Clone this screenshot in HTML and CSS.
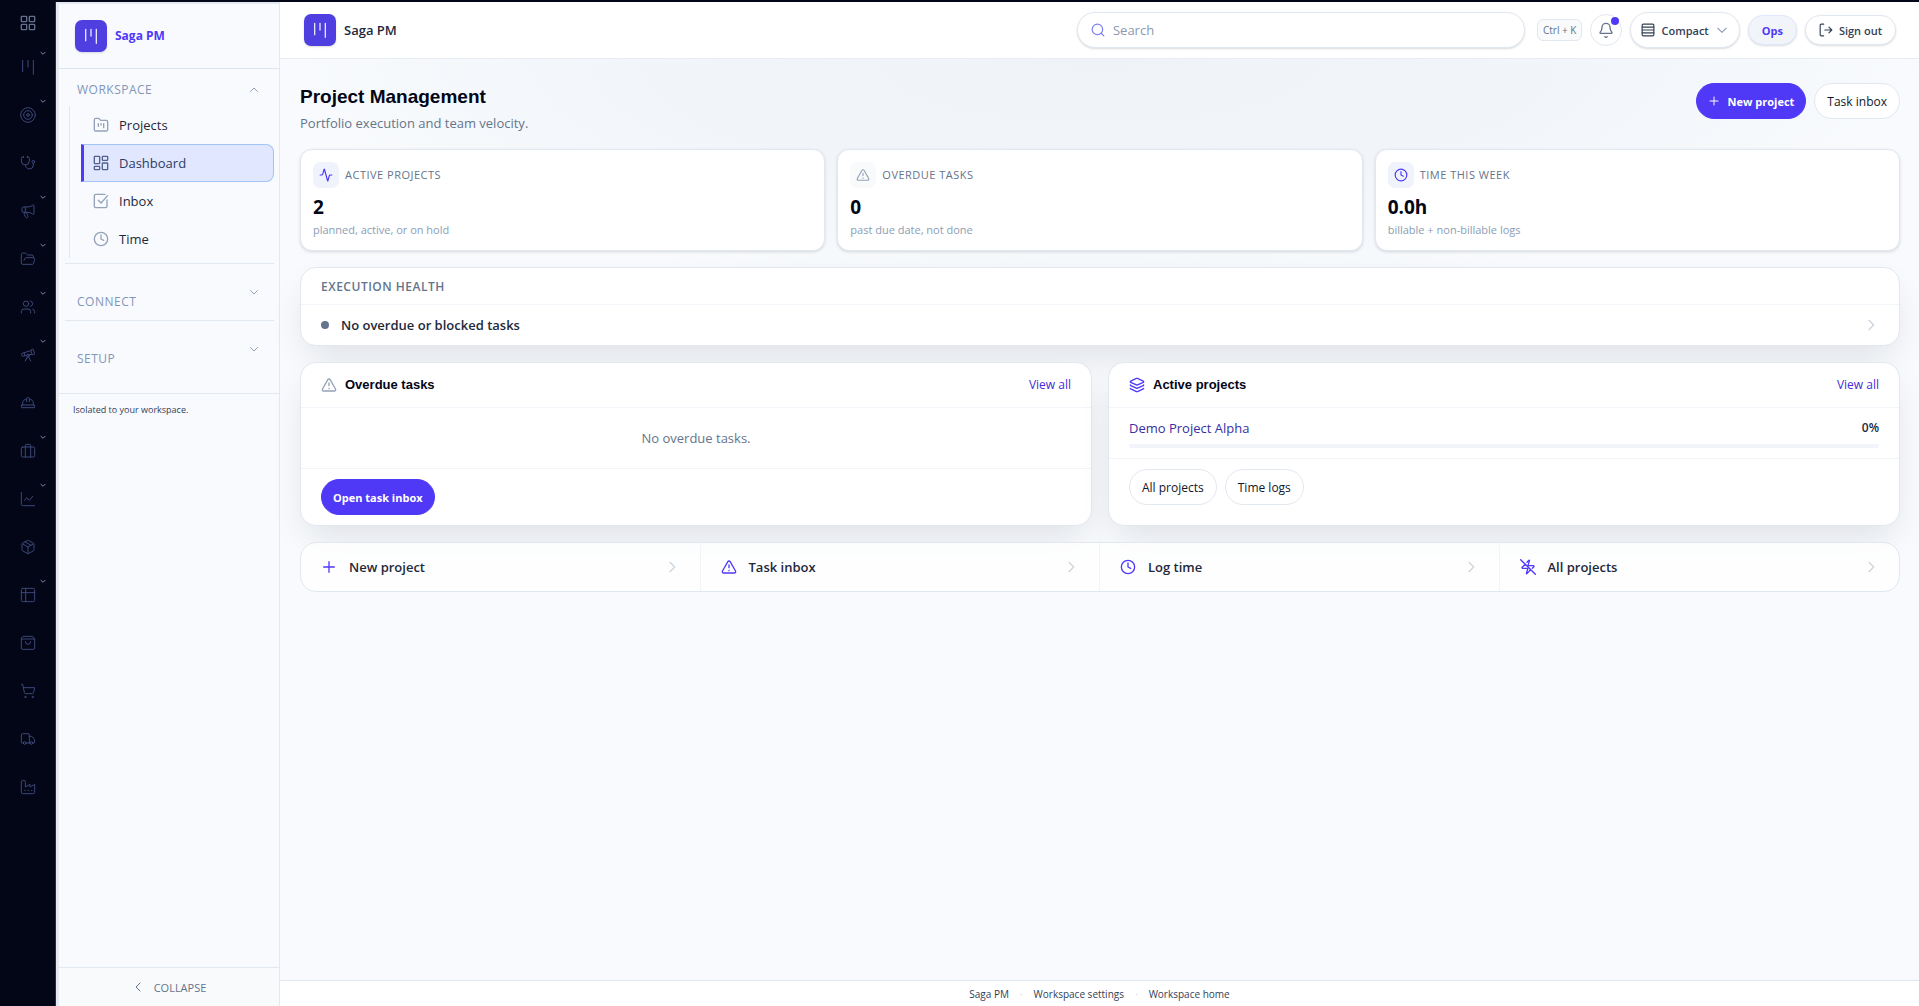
FILE: index.html
```html
<!DOCTYPE html>
<html lang="en">
<head>
    <meta charset="UTF-8">
    <meta name="viewport" content="width=device-width, initial-scale=1.0">
    <title>Saga PM</title>
    <link rel="stylesheet" href="styles.css">
</head>
<body>
    <!-- icon sprite -->
    <svg class="sprite" xmlns="http://www.w3.org/2000/svg">
        <symbol id="i-grid" viewBox="0 0 24 24"><rect x="2" y="2" width="8" height="8" rx="1"/><rect x="14" y="2" width="8" height="8" rx="1"/><rect x="14" y="14" width="8" height="8" rx="1"/><rect x="2" y="14" width="8" height="8" rx="1"/></symbol>
        <symbol id="i-bars" viewBox="0 0 24 24"><path d="M4 2v17M12 2v10M20 2v21"/></symbol>
        <symbol id="i-target" viewBox="0 0 24 24"><circle cx="12" cy="12" r="11"/><circle cx="12" cy="12" r="6.5"/><circle cx="12" cy="12" r="2"/></symbol>
        <symbol id="i-stethoscope" viewBox="0 0 24 24"><path d="M11 2v2M5 2v2M5 3H4a2 2 0 0 0-2 2v4a6 6 0 0 0 12 0V5a2 2 0 0 0-2-2h-1M8 15a6 6 0 0 0 12 0v-3"/><circle cx="20" cy="10" r="2"/></symbol>
        <symbol id="i-megaphone" viewBox="0 0 24 24"><path d="M11 6a13 13 0 0 0 8.400-2.800A1 1 0 0 1 21 4v12a1 1 0 0 1-1.600.8A13 13 0 0 0 11 14H5a2 2 0 0 1-2-2V8a2 2 0 0 1 2-2zM6 14a12 12 0 0 0 2.400 7.200 2 2 0 0 0 3.200-2.400A8 8 0 0 1 10 14M8 6v8"/></symbol>
        <symbol id="i-folder-open" viewBox="0 0 24 24"><path d="m6 14 1.450-2.900A2 2 0 0 1 9.240 10H20a2 2 0 0 1 1.940 2.500l-1.550 6a2 2 0 0 1-1.940 1.500H4a2 2 0 0 1-2-2V5c0-1.100.9-2 2-2h3.930a2 2 0 0 1 1.660.9l.82 1.200a2 2 0 0 0 1.660.9H18a2 2 0 0 1 2 2v2"/></symbol>
        <symbol id="i-users" viewBox="0 0 24 24"><path d="M16 21v-2a4 4 0 0 0-4-4H6a4 4 0 0 0-4 4v2M22 21v-2a4 4 0 0 0-3-3.870M16 3.130a4 4 0 0 1 0 7.750"/><circle cx="9" cy="7" r="4"/></symbol>
        <symbol id="i-telescope" viewBox="0 0 24 24"><path d="m10.065 12.493-6.180 1.318a.934.934 0 0 1-1.108-.702l-.537-2.150a1.070 1.070 0 0 1 .691-1.265l13.504-4.440M13.560 11.747l4.332-.924M16 21l-3.105-6.210M16.485 5.940a2 2 0 0 1 1.455-2.425l1.090-.272a1 1 0 0 1 1.212.727l1.515 6.060a1 1 0 0 1-.727 1.213l-1.090.272a2 2 0 0 1-2.425-1.455zM6.158 8.633l1.114 4.456M8 21l3.105-6.210"/><circle cx="12" cy="13" r="2"/></symbol>
        <symbol id="i-hat" viewBox="0 0 24 24"><path d="M10 10V5a1 1 0 0 1 1-1h2a1 1 0 0 1 1 1v5M14 6a6 6 0 0 1 6 6v3M4 15v-3a6 6 0 0 1 6-6"/><rect x="2" y="15" width="20" height="4" rx="1"/></symbol>
        <symbol id="i-briefcase" viewBox="0 0 24 24"><path d="M8 21V4a2 2 0 0 1 2-2h4a2 2 0 0 1 2 2v17"/><rect x="2" y="6" width="20" height="15" rx="2"/></symbol>
        <symbol id="i-chart" viewBox="0 0 24 24"><path d="M2 2v18a2 2 0 0 0 2 2h18M19 8l-5 6-4-4-3 4"/></symbol>
        <symbol id="i-package" viewBox="0 0 24 24"><path d="M11 21.730a2 2 0 0 0 2 0l7-4A2 2 0 0 0 21 16V8a2 2 0 0 0-1-1.730l-7-4a2 2 0 0 0-2 0l-7 4A2 2 0 0 0 3 8v8a2 2 0 0 0 1 1.730zM12 22V12M3.300 7 12 12l8.700-5M7.500 4.270l9 5.150"/></symbol>
        <symbol id="i-table" viewBox="0 0 24 24"><rect x="2" y="2" width="20" height="20" rx="2"/><path d="M2 8.500h20M8.500 2v20"/></symbol>
        <symbol id="i-bag" viewBox="0 0 24 24"><path d="M2 5.500v14a2 2 0 0 0 2 2h16a2 2 0 0 0 2-2v-14L19 2H5zM2 6h20M16 10a4 4 0 0 1-8 0"/></symbol>
        <symbol id="i-cart" viewBox="0 0 24 24"><circle cx="8" cy="21" r="1"/><circle cx="19" cy="21" r="1"/><path d="M2 2h2l2.660 12.420a2 2 0 0 0 2 1.580h9.780a2 2 0 0 0 1.950-1.570L22 7H5.120"/></symbol>
        <symbol id="i-truck" viewBox="0 0 24 24"><path d="M14 18V6a2 2 0 0 0-2-2H4a2 2 0 0 0-2 2v11a1 1 0 0 0 1 1h2M15 18H9M19 18h2a1 1 0 0 0 1-1v-3.650a1 1 0 0 0-.22-.624l-3.480-4.350A1 1 0 0 0 17.520 8H14"/><circle cx="17" cy="18" r="2"/><circle cx="7" cy="18" r="2"/></symbol>
        <symbol id="i-factory" viewBox="0 0 24 24"><path d="M2 20a2 2 0 0 0 2 2h16a2 2 0 0 0 2-2V8l-7 4V8l-7 4V4a2 2 0 0 0-2-2H4a2 2 0 0 0-2 2zM17 17h1M12 17h1M7 17h1"/></symbol>
        <symbol id="i-folder-kanban" viewBox="0 0 24 24"><path d="M4 21h16a2 2 0 0 0 2-2V7a2 2 0 0 0-2-2h-8a2 2 0 0 1-1.700-.9l-.8-1.200A2 2 0 0 0 7.900 2H4a2 2 0 0 0-2 2v15c0 1.100.9 2 2 2zM8 10v4M12 10v2M16 10v6"/></symbol>
        <symbol id="i-dashboard" viewBox="0 0 24 24"><rect x="2" y="2" width="8" height="11" rx="1"/><rect x="14" y="2" width="8" height="6" rx="1"/><rect x="14" y="12" width="8" height="10" rx="1"/><rect x="2" y="17" width="8" height="5" rx="1"/></symbol>
        <symbol id="i-check" viewBox="0 0 24 24"><path d="M21 10.500V20a2 2 0 0 1-2 2H4a2 2 0 0 1-2-2V4a2 2 0 0 1 2-2h14M8 11l4 4L22 4"/></symbol>
        <symbol id="i-clock" viewBox="0 0 24 24"><circle cx="12" cy="12" r="10"/><path d="M12 6v6l4 2"/></symbol>
        <symbol id="i-down" viewBox="0 0 24 24"><path d="m5 9 7 7 7-7"/></symbol>
        <symbol id="i-up" viewBox="0 0 24 24"><path d="m5 15 7-7 7 7"/></symbol>
        <symbol id="i-left" viewBox="0 0 24 24"><path d="m16 4-8 8 8 8"/></symbol>
        <symbol id="i-right" viewBox="0 0 24 24"><path d="m9 5 7 7-7 7"/></symbol>
        <symbol id="i-search" viewBox="0 0 24 24"><circle cx="11" cy="11" r="9"/><path d="m22 22-4-4"/></symbol>
        <symbol id="i-bell" viewBox="0 0 24 24"><path d="M10.300 22a2 2 0 0 0 3.400 0M3.300 15.300A1 1 0 0 0 4 17h16a1 1 0 0 0 .74-1.670C19.400 14 18 12.500 18 8A6 6 0 0 0 6 8c0 4.500-1.400 6-2.700 7.300"/></symbol>
        <symbol id="i-rows" viewBox="0 0 24 24"><rect x="2" y="2" width="20" height="20" rx="2"/><path d="M2 7h20M2 12h20M2 17h20"/></symbol>
        <symbol id="i-logout" viewBox="0 0 24 24"><path d="M8 2H4a2 2 0 0 0-2 2v16a2 2 0 0 0 2 2h4M17 17l5-5-5-5M22 12H10"/></symbol>
        <symbol id="i-plus" viewBox="0 0 24 24"><path d="M4 12h16M12 4v16"/></symbol>
        <symbol id="i-activity" viewBox="0 0 24 24"><path d="M22 12h-2.500a2 2 0 0 0-1.930 1.460l-2.350 8.360a.25.25 0 0 1-.48 0L9.240 2.180a.25.25 0 0 0-.48 0l-2.350 8.360A2 2 0 0 1 4.490 12H2"/></symbol>
        <symbol id="i-warn" viewBox="0 0 24 24"><path d="m21.730 18-8-14a2 2 0 0 0-3.480 0l-8 14A2 2 0 0 0 4 21h16a2 2 0 0 0 1.730-3M12 9v4M12 17v.5"/></symbol>
        <symbol id="i-layers" viewBox="0 0 24 24"><path d="M12.830 2.180a2 2 0 0 0-1.660 0L2.600 6.080a1 1 0 0 0 0 1.830l8.580 3.910a2 2 0 0 0 1.660 0l8.580-3.900a1 1 0 0 0 0-1.830zM2 12a1 1 0 0 0 .58.910l8.600 3.910a2 2 0 0 0 1.650 0l8.580-3.900A1 1 0 0 0 22 12M2 17a1 1 0 0 0 .58.910l8.600 3.910a2 2 0 0 0 1.650 0l8.580-3.900A1 1 0 0 0 22 17"/></symbol>
        <symbol id="i-zap-off" viewBox="0 0 24 24"><path d="M10.500 4.900 13.400 2a.5.5 0 0 1 .86.460l-1.900 6A1 1 0 0 0 13.300 10H20a1 1 0 0 1 .8 1.600l-2.300 2.400M16 16l-5.500 5.900a.5.5 0 0 1-.86-.46l1.920-6.020A1 1 0 0 0 10.620 14H4a1 1 0 0 1-.78-1.630L8 8M1 1l22 22"/></symbol>
    </svg>

    <div class="app">
        <nav class="rail" aria-label="Apps">
            <a href="#" class="rail-item rail-home" aria-label="All apps"><svg class="icon"><use href="#i-grid"/></svg></a>
            <a href="#" class="rail-item" aria-label="Projects"><svg class="icon"><use href="#i-bars"/></svg><svg class="rail-caret"><use href="#i-down"/></svg></a>
            <a href="#" class="rail-item" aria-label="Goals"><svg class="icon"><use href="#i-target"/></svg><svg class="rail-caret"><use href="#i-down"/></svg></a>
            <a href="#" class="rail-item" aria-label="Health"><svg class="icon"><use href="#i-stethoscope"/></svg></a>
            <a href="#" class="rail-item" aria-label="Marketing"><svg class="icon"><use href="#i-megaphone"/></svg><svg class="rail-caret"><use href="#i-down"/></svg></a>
            <a href="#" class="rail-item" aria-label="Files"><svg class="icon"><use href="#i-folder-open"/></svg><svg class="rail-caret"><use href="#i-down"/></svg></a>
            <a href="#" class="rail-item" aria-label="People"><svg class="icon"><use href="#i-users"/></svg><svg class="rail-caret"><use href="#i-down"/></svg></a>
            <a href="#" class="rail-item" aria-label="Discovery"><svg class="icon"><use href="#i-telescope"/></svg><svg class="rail-caret"><use href="#i-down"/></svg></a>
            <a href="#" class="rail-item" aria-label="Field"><svg class="icon"><use href="#i-hat"/></svg></a>
            <a href="#" class="rail-item" aria-label="Business"><svg class="icon"><use href="#i-briefcase"/></svg><svg class="rail-caret"><use href="#i-down"/></svg></a>
            <a href="#" class="rail-item" aria-label="Analytics"><svg class="icon"><use href="#i-chart"/></svg><svg class="rail-caret"><use href="#i-down"/></svg></a>
            <a href="#" class="rail-item" aria-label="Inventory"><svg class="icon"><use href="#i-package"/></svg></a>
            <a href="#" class="rail-item" aria-label="Tables"><svg class="icon"><use href="#i-table"/></svg><svg class="rail-caret"><use href="#i-down"/></svg></a>
            <a href="#" class="rail-item" aria-label="Store"><svg class="icon"><use href="#i-bag"/></svg></a>
            <a href="#" class="rail-item" aria-label="Orders"><svg class="icon"><use href="#i-cart"/></svg></a>
            <a href="#" class="rail-item" aria-label="Shipping"><svg class="icon"><use href="#i-truck"/></svg></a>
            <a href="#" class="rail-item" aria-label="Manufacturing"><svg class="icon"><use href="#i-factory"/></svg></a>
        </nav>

        <aside class="sidebar">
            <a href="#" class="side-brand"><span class="logo"><svg class="icon"><use href="#i-bars"/></svg></span>Saga PM</a>
            <div class="side-group">
                <button type="button" class="side-title side-title-open">Workspace<svg class="icon"><use href="#i-up"/></svg></button>
                <div class="side-links">
                    <a href="#" class="side-link"><svg class="icon"><use href="#i-folder-kanban"/></svg>Projects</a>
                    <a href="#" class="side-link active"><svg class="icon"><use href="#i-dashboard"/></svg>Dashboard</a>
                    <a href="#" class="side-link"><svg class="icon"><use href="#i-check"/></svg>Inbox</a>
                    <a href="#" class="side-link"><svg class="icon"><use href="#i-clock"/></svg>Time</a>
                </div>
            </div>
            <div class="side-group">
                <button type="button" class="side-title"><span>Connect</span><svg class="icon"><use href="#i-down"/></svg></button>
            </div>
            <div class="side-group side-group-last">
                <button type="button" class="side-title"><span>Setup</span><svg class="icon"><use href="#i-down"/></svg></button>
            </div>
            <p class="side-note">Isolated to your workspace.</p>
            <button type="button" class="collapse"><svg class="icon"><use href="#i-left"/></svg>Collapse</button>
        </aside>

        <div class="page">
            <header class="topbar">
                <a href="#" class="brand"><span class="logo"><svg class="icon"><use href="#i-bars"/></svg></span>Saga PM</a>
                <div class="tools">
                    <label class="search"><svg class="icon"><use href="#i-search"/></svg><input type="search" placeholder="Search" aria-label="Search"></label>
                    <kbd>Ctrl + K</kbd>
                    <button type="button" class="bell" aria-label="Notifications"><svg class="icon"><use href="#i-bell"/></svg><span class="bell-dot"></span></button>
                    <button type="button" class="tool tool-tall"><svg class="icon"><use href="#i-rows"/></svg>Compact<svg class="icon caret"><use href="#i-down"/></svg></button>
                    <button type="button" class="tool ops">Ops</button>
                    <button type="button" class="tool"><svg class="icon"><use href="#i-logout"/></svg>Sign out</button>
                </div>
            </header>

            <main class="main">
                <div class="heading">
                    <div>
                        <h1>Project Management</h1>
                        <p>Portfolio execution and team velocity.</p>
                    </div>
                    <div class="actions">
                        <button type="button" class="btn primary"><svg class="icon"><use href="#i-plus"/></svg>New project</button>
                        <button type="button" class="btn">Task inbox</button>
                    </div>
                </div>

                <section class="stats">
                    <div class="stat">
                        <div class="stat-label"><span class="chip"><svg class="icon"><use href="#i-activity"/></svg></span>Active projects</div>
                        <div class="stat-value">2</div>
                        <div class="stat-hint">planned, active, or on hold</div>
                    </div>
                    <div class="stat">
                        <div class="stat-label"><span class="chip muted"><svg class="icon"><use href="#i-warn"/></svg></span>Overdue tasks</div>
                        <div class="stat-value">0</div>
                        <div class="stat-hint">past due date, not done</div>
                    </div>
                    <div class="stat">
                        <div class="stat-label"><span class="chip"><svg class="icon"><use href="#i-clock"/></svg></span>Time this week</div>
                        <div class="stat-value">0.0h</div>
                        <div class="stat-hint">billable + non-billable logs</div>
                    </div>
                </section>

                <section class="panel">
                    <h2 class="health-title">Execution health</h2>
                    <a href="#" class="health-row"><span class="dot"></span>No overdue or blocked tasks<svg class="icon go"><use href="#i-right"/></svg></a>
                </section>

                <div class="columns">
                    <section class="panel">
                        <div class="panel-head"><svg class="icon muted"><use href="#i-warn"/></svg><h2>Overdue tasks</h2><a href="#">View all</a></div>
                        <p class="empty">No overdue tasks.</p>
                        <div class="panel-foot"><button type="button" class="btn primary">Open task inbox</button></div>
                    </section>
                    <section class="panel">
                        <div class="panel-head"><svg class="icon"><use href="#i-layers"/></svg><h2>Active projects</h2><a href="#">View all</a></div>
                        <div class="project">
                            <div class="project-row"><a href="#">Demo Project Alpha</a><span>0%</span></div>
                            <div class="progress"></div>
                        </div>
                        <div class="panel-foot">
                            <button type="button" class="btn">All projects</button>
                            <button type="button" class="btn">Time logs</button>
                        </div>
                    </section>
                </div>

                <nav class="quick" aria-label="Quick actions">
                    <a href="#"><svg class="icon"><use href="#i-plus"/></svg>New project<svg class="icon go"><use href="#i-right"/></svg></a>
                    <a href="#"><svg class="icon"><use href="#i-warn"/></svg>Task inbox<svg class="icon go"><use href="#i-right"/></svg></a>
                    <a href="#"><svg class="icon"><use href="#i-clock"/></svg>Log time<svg class="icon go"><use href="#i-right"/></svg></a>
                    <a href="#"><svg class="icon"><use href="#i-zap-off"/></svg>All projects<svg class="icon go"><use href="#i-right"/></svg></a>
                </nav>
            </main>

            <footer class="footer">
                <a href="#">Saga PM</a><span>·</span><a href="#">Workspace settings</a><span>·</span><a href="#">Workspace home</a>
            </footer>
        </div>
    </div>
</body>
</html>
```
FILE: styles.css
```css
* {
    box-sizing: border-box;
}

body {
    margin: 0;
    font-family: "Open Sans", "Noto Sans", sans-serif;
    font-size: 13px;
    line-height: 20px;
    color: #0f172a;
    background-color: #f8fafc;
}

h1, h2, p {
    margin: 0;
}

a {
    color: inherit;
    text-decoration: none;
}

button {
    font-family: inherit;
    cursor: pointer;
}

.sprite {
    display: none;
}

.icon {
    width: 16px;
    height: 16px;
    flex: none;
    fill: none;
    stroke: currentColor;
    stroke-width: 2;
    stroke-linecap: round;
    stroke-linejoin: round;
}

.app {
    display: flex;
    min-height: 100vh;
    border-top: 2px solid #020617;
}

/* dark app rail */
.rail {
    width: 56px;
    flex: none;
    display: flex;
    flex-direction: column;
    align-items: center;
    padding-left: 1px;
    background-color: #020617;
    border-right: 1px solid #272c42;
}

.rail-item {
    position: relative;
    width: 100%;
    height: 48px;
    display: flex;
    align-items: center;
    justify-content: center;
    color: #3d4878;
}

.rail-item .icon {
    stroke-width: 1.5;
}

.rail-home {
    height: 41px;
    color: #64708c;
}

.rail-home .icon {
    stroke-width: 2;
}

.rail-caret {
    position: absolute;
    right: 8px;
    top: 6px;
    width: 8px;
    height: 8px;
    fill: none;
    stroke: #7c8bb0;
    stroke-width: 3;
}

/* sidebar */
.sidebar {
    width: 224px;
    flex: none;
    display: flex;
    flex-direction: column;
    background-color: #f8fafe;
    border: solid #e4e9f1;
    border-width: 2px 1px 0 3px;
}

.logo {
    width: 32px;
    height: 32px;
    flex: none;
    display: flex;
    align-items: center;
    justify-content: center;
    border-radius: 7px;
    background-color: #4f3fe0;
    color: #e4e8ff;
    box-shadow: 0 1px 2px rgba(15, 23, 42, 0.15);
}

.side-brand {
    display: flex;
    align-items: center;
    gap: 8px;
    height: 65px;
    padding: 0 16px;
    border-bottom: 1px solid #dde6f0;
    font-size: 12px;
    font-weight: 700;
    color: #4f39f6;
}

.side-group {
    margin: 0 5px 0 6px;
    border-bottom: 1px solid #e2e8f0;
}

.side-title {
    width: 100%;
    height: 56px;
    display: flex;
    justify-content: space-between;
    padding: 22px 14px 0 12px;
    border: none;
    background: none;
    font-size: 12px;
    font-weight: 500;
    line-height: 16px;
    letter-spacing: 0.5px;
    text-transform: uppercase;
    color: #8296b8;
}

.side-title span {
    padding-top: 8px;
}

.side-title .icon {
    width: 12px;
    height: 12px;
    color: #94a3b8;
}

.side-title-open {
    height: 37px;
    padding-top: 12px;
    align-items: center;
    padding-bottom: 8px;
}

.side-links {
    display: flex;
    flex-direction: column;
    margin: 0 0 5px 4px;
    padding-left: 11px;
    border-left: 1px solid #e2e8f0;
}

.side-link {
    display: flex;
    align-items: center;
    gap: 10px;
    height: 38px;
    padding-left: 12px;
    font-weight: 500;
    color: #1e293b;
}

.side-link .icon {
    color: #94a3b8;
}

.side-link.active {
    background-color: #e0e7ff;
    border: 1px solid #a3c4f8;
    border-left: 3px solid #4f39f6;
    border-radius: 0 8px 8px 0;
    padding-left: 9px;
    color: #2d3c63;
}

.side-link.active .icon {
    color: #52618a;
}

.side-group-last {
    margin: 0;
    padding: 0 5px 16px 6px;
}

.side-note {
    padding: 8px 14px;
    font-size: 9px;
    line-height: 16px;
    color: #334155;
}

.collapse {
    display: flex;
    align-items: center;
    justify-content: center;
    gap: 10px;
    height: 39px;
    margin-top: auto;
    border: none;
    border-top: 1px solid #e2e8f0;
    background-color: #f8fafc;
    font-size: 11px;
    font-weight: 500;
    text-transform: uppercase;
    color: #64748b;
}

.collapse .icon {
    width: 12px;
    height: 12px;
}

/* top bar */
.page {
    flex: 1;
    min-width: 0;
    display: flex;
    flex-direction: column;
}

.topbar {
    display: flex;
    align-items: center;
    justify-content: space-between;
    height: 57px;
    padding: 0 23px 0 24px;
    background-color: #fff;
    border-bottom: 1px solid #e8edf4;
}

.brand {
    display: flex;
    align-items: center;
    gap: 8px;
    font-weight: 600;
    color: #1e293b;
}

.tools {
    display: flex;
    align-items: center;
    gap: 8px;
}

.search {
    display: flex;
    align-items: center;
    gap: 8px;
    width: 448px;
    height: 36px;
    margin-right: 4px;
    padding: 0 13px;
    border: 1px solid #e2e8f0;
    border-radius: 18px;
    background-color: #fff;
    box-shadow: 0 1px 2px rgba(15, 23, 42, 0.15);
}

.search .icon {
    width: 14px;
    height: 14px;
    color: #7c7cf5;
}

.search input {
    flex: 1;
    min-width: 0;
    padding: 0;
    border: none;
    outline: none;
    background: none;
    font-family: inherit;
    font-size: 13px;
}

.search input::placeholder {
    color: #8c99b0;
}

kbd {
    padding: 2px 5px;
    border: 1px solid #e2e8f0;
    border-radius: 6px;
    background-color: #f8fafc;
    font-family: inherit;
    font-size: 10px;
    line-height: 16px;
    color: #64748b;
}

.bell {
    position: relative;
    display: flex;
    align-items: center;
    justify-content: center;
    width: 32px;
    height: 32px;
    padding: 0;
    border: 1px solid #e2e8f0;
    border-radius: 50%;
    background-color: #fff;
    color: #64748b;
}

.bell-dot {
    position: absolute;
    top: 2px;
    right: 2px;
    width: 8px;
    height: 8px;
    border-radius: 50%;
    background-color: #4f39f6;
}

.tool {
    display: flex;
    align-items: center;
    gap: 6px;
    height: 30px;
    padding: 0 13px;
    border: 1px solid #e2e8f0;
    border-radius: 18px;
    background-color: #fff;
    box-shadow: 0 1px 2px rgba(15, 23, 42, 0.15);
    font-size: 11px;
    font-weight: 600;
    color: #334155;
}

.tool-tall {
    height: 36px;
    padding: 0 10px;
}

.tool .icon {
    width: 14px;
    height: 14px;
}

.tool .caret {
    color: #94a3b8;
}

.ops {
    background-color: #f1f5f9;
    border-color: #e0e7ff;
    font-weight: 700;
    color: #4f39f6;
}

/* dashboard */
.main {
    flex: 1;
    display: flex;
    flex-direction: column;
    gap: 16px;
    padding: 24px 19px 24px 20px;
    background-color: #f8fafd;
    background-image: radial-gradient(ellipse 50% 240px at 50% 0, #eff3f8, #f1f5f9 50%, #f8fafd);
}

.heading {
    display: flex;
    justify-content: space-between;
    align-items: flex-start;
    height: 50px;
}

.heading h1 {
    font-family: "Liberation Sans", Arial, sans-serif;
    font-size: 19px;
    line-height: 28px;
    color: #020617;
}

.heading p {
    line-height: 24px;
    color: #64748b;
}

.actions {
    display: flex;
    gap: 8px;
}

.btn {
    display: flex;
    align-items: center;
    gap: 8px;
    height: 36px;
    padding: 0 12px;
    border: 1px solid #e2e8f0;
    border-radius: 18px;
    background-color: #fff;
    font-size: 12px;
    font-weight: 500;
    color: #0f172a;
}

.btn.primary {
    padding: 0 11px;
    border-color: #4f39f6;
    background-color: #4f39f6;
    font-size: 11px;
    font-weight: 700;
    color: #fff;
}

.btn .icon {
    width: 12px;
    height: 12px;
}

.stats {
    display: grid;
    grid-template-columns: repeat(3, 1fr);
    gap: 12px;
}

.stat {
    padding: 12px;
    border: 1px solid #e2e8f0;
    border-radius: 12px;
    background-color: #fff;
    box-shadow: 0 1px 3px rgba(15, 23, 42, 0.15);
}

.stat-label {
    display: flex;
    align-items: center;
    gap: 6px;
    font-size: 11px;
    font-weight: 500;
    letter-spacing: 0.5px;
    text-transform: uppercase;
    color: #64748b;
}

.chip {
    width: 26px;
    height: 26px;
    display: flex;
    align-items: center;
    justify-content: center;
    border-radius: 7px;
    background-color: #f0f3fc;
    color: #4f39f6;
}

.chip .icon {
    width: 14px;
    height: 14px;
}

.chip.muted {
    background-color: #f8fafc;
    color: #94a3b8;
}

.stat-value {
    padding-top: 6px;
    font-size: 19px;
    font-weight: 700;
    line-height: 26px;
    color: #020617;
}

.stat-hint {
    padding-top: 2px;
    font-size: 11px;
    line-height: 16px;
    color: #8c9db5;
}

.panel {
    border: 1px solid #e2e8f0;
    border-radius: 16px;
    background-color: #fff;
    box-shadow: 0 16px 36px -8px rgba(15, 23, 42, 0.12);
}

.health-title {
    height: 37px;
    padding: 0 20px;
    border-bottom: 1px solid #f1f5f9;
    font-size: 12px;
    font-weight: 600;
    line-height: 37px;
    letter-spacing: 0.5px;
    text-transform: uppercase;
    color: #64748b;
}

.health-row {
    display: flex;
    align-items: center;
    gap: 12px;
    height: 40px;
    padding: 0 20px;
    font-weight: 600;
    color: #1e293b;
}

.dot {
    width: 8px;
    height: 8px;
    border-radius: 50%;
    background-color: #64748b;
}

.go {
    margin-left: auto;
    color: #cbd5e1;
}

.columns {
    display: grid;
    grid-template-columns: 1fr 1fr;
    gap: 16px;
}

.panel-head {
    display: flex;
    align-items: center;
    gap: 8px;
    height: 45px;
    padding: 0 20px;
    border-bottom: 1px solid #f1f5f9;
    color: #4f39f6;
}

.panel-head .icon.muted {
    color: #94a3b8;
}

.panel-head h2 {
    font-family: "Liberation Sans", Arial, sans-serif;
    font-size: 13px;
    color: #020617;
}

.panel-head a {
    margin-left: auto;
    font-size: 12px;
    font-weight: 500;
    color: #432dd7;
}

.empty {
    height: 61px;
    border-bottom: 1px solid #f1f5f9;
    line-height: 60px;
    text-align: center;
    color: #64748b;
}

.project {
    padding: 10px 20px;
    border-bottom: 1px solid #f1f5f9;
}

.project-row {
    display: flex;
    justify-content: space-between;
    font-weight: 500;
    color: #3730a3;
}

.project-row span {
    font-size: 12px;
    font-weight: 600;
    color: #1e293b;
}

.progress {
    height: 4px;
    margin-top: 6px;
    border-radius: 2px;
    background-color: #f1f5f9;
}

.panel-foot {
    display: flex;
    gap: 8px;
    padding: 10px 20px;
}

.quick {
    display: grid;
    grid-template-columns: repeat(4, 1fr);
    border: 1px solid #e2e8f0;
    border-radius: 16px;
    background-color: rgba(255, 255, 255, 0.8);
}

.quick a {
    display: flex;
    align-items: center;
    gap: 12px;
    height: 48px;
    padding: 0 20px;
    border-right: 1px solid #f1f5f9;
    font-weight: 600;
    color: #1e293b;
}

.quick a:last-child {
    border-right: none;
}

.quick .icon {
    color: #4f39f6;
}

.quick .go {
    color: #cbd5e1;
}

/* footer */
.footer {
    display: flex;
    align-items: center;
    justify-content: center;
    gap: 11px;
    height: 26px;
    border-top: 1px solid #e2e8f0;
    background-color: #fff;
    font-size: 10px;
    font-weight: 500;
    color: #334155;
}

.footer span {
    color: #cbd5e1;
}
```
